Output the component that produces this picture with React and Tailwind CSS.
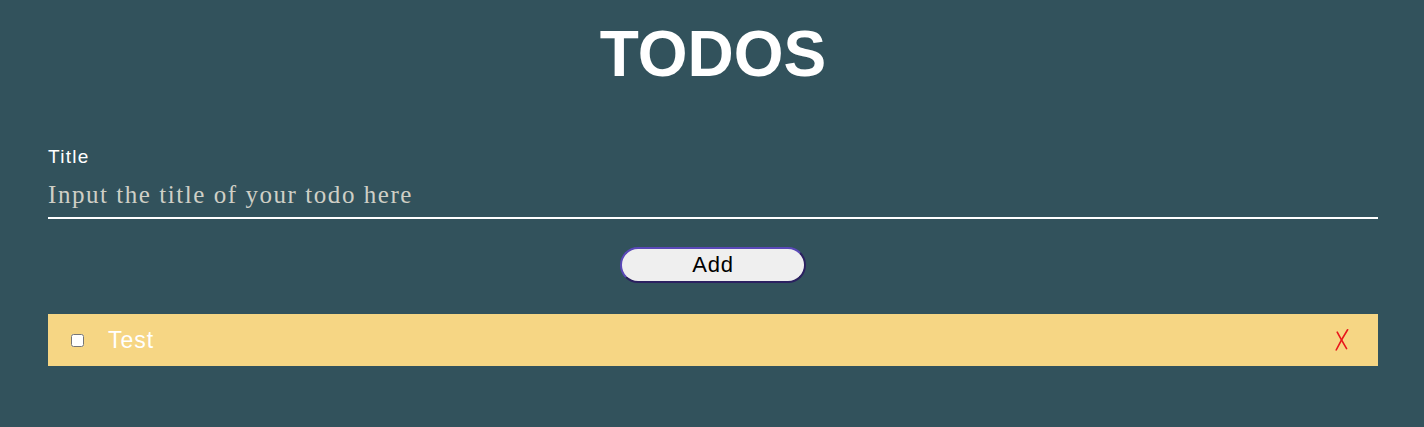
export default function App() {
  return (
    <div className="min-h-[427px] bg-[#32525c] pl-[48px] pr-[46px] pt-[14px] font-['Liberation_Sans',Arial,sans-serif]">
      <h1 className="text-center text-[64px] font-bold leading-[80px] text-white">TODOS</h1>
      <form className="mt-[52px] flex flex-col" onSubmit={(e) => e.preventDefault()}>
        <label className="text-[19px] leading-[22px] tracking-[1.3px] text-white">Title</label>
        <input
          type="text"
          placeholder="Input the title of your todo here"
          className="mt-[8px] h-[43px] border-b-2 border-white bg-transparent pb-[4px] font-['Liberation_Serif',serif] text-[25px] tracking-[1.55px] text-white outline-none placeholder:text-[#cfcfc6]"
        />
        <div className="mt-[28px] flex justify-center">
          <button
            type="submit"
            className="h-[36px] w-[186px] rounded-full border-2 border-t-[#5a48b8] border-l-[#5a48b8] border-b-[#2b2160] border-r-[#2b2160] bg-[#efefef] text-[22px] leading-none tracking-[0.8px] text-black"
          >
            Add
          </button>
        </div>
      </form>
      <ul className="mt-[31px]">
        <li className="flex h-[52px] items-center bg-[#f6d684] pl-[23px] pr-[29px]">
          <input type="checkbox" className="h-[13px] w-[13px]" />
          <span className="ml-[24px] text-[23px] tracking-[1px] text-white">Test</span>
          <button className="ml-auto">
            <svg width="14" height="22" viewBox="0 0 14 22" fill="none" stroke="#e8161b" strokeWidth="1.6" strokeLinecap="round">
              <path d="M12.6 0.8 C9 6.5 5 13.5 1.2 21" />
              <path d="M2.2 3.2 C5 8.5 8.5 14.5 11.6 19.6" />
            </svg>
          </button>
        </li>
      </ul>
    </div>
  );
}
